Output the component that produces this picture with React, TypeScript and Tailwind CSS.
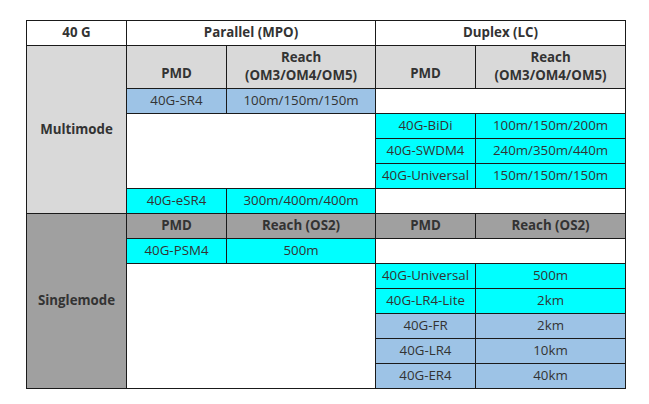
import React from "react";

const cell = "border border-[#1a1a1a] p-0 text-center align-middle h-[25px]";
const cyan = "bg-[#00ffff]";
const blue = "bg-[#9dc3e6]";
const light = "bg-[#d9d9d9]";
const dark = "bg-[#a0a0a0]";

function Pair({ pmd, reach, tone }: { pmd: string; reach: string; tone: string }) {
  return (
    <>
      <td className={`${cell} ${tone}`}>{pmd}</td>
      <td className={`${cell} ${tone}`}>{reach}</td>
    </>
  );
}

export default function App() {
  return (
    <div
      className="min-h-screen bg-white pl-[26px] pt-[20px] text-[13.3px] text-[#333]"
      style={{ fontFamily: '"Open Sans", "Liberation Sans", sans-serif' }}
    >
      <table className="table-fixed border-collapse w-[599px]">
        <colgroup>
          <col className="w-[100px]" />
          <col className="w-[100px]" />
          <col className="w-[149px]" />
          <col className="w-[100px]" />
          <col className="w-[150px]" />
        </colgroup>
        <tbody>
          <tr>
            <td className={`${cell} font-bold`}>40 G</td>
            <td colSpan={2} className={`${cell} font-bold`}>Parallel (MPO)</td>
            <td colSpan={2} className={`${cell} font-bold`}>Duplex (LC)</td>
          </tr>
          <tr>
            <td rowSpan={6} className={`${cell} ${light} font-bold`}>Multimode</td>
            <td className={`${cell} ${light} font-bold !align-bottom h-[43px] pb-[4px]`}>PMD</td>
            <td className={`${cell} ${light} font-bold !align-bottom leading-[18px] pb-[4px]`}>
              Reach
              <br />
              (OM3/OM4/OM5)
            </td>
            <td className={`${cell} ${light} font-bold !align-bottom pb-[4px]`}>PMD</td>
            <td className={`${cell} ${light} font-bold !align-bottom leading-[18px] pb-[4px]`}>
              Reach
              <br />
              (OM3/OM4/OM5)
            </td>
          </tr>
          <tr>
            <Pair pmd="40G-SR4" reach="100m/150m/150m" tone={blue} />
            <td colSpan={2} className={cell}></td>
          </tr>
          <tr>
            <td colSpan={2} rowSpan={3} className={cell}></td>
            <Pair pmd="40G-BiDi" reach="100m/150m/200m" tone={cyan} />
          </tr>
          <tr>
            <Pair pmd="40G-SWDM4" reach="240m/350m/440m" tone={cyan} />
          </tr>
          <tr>
            <Pair pmd="40G-Universal" reach="150m/150m/150m" tone={cyan} />
          </tr>
          <tr>
            <Pair pmd="40G-eSR4" reach="300m/400m/400m" tone={cyan} />
            <td colSpan={2} className={cell}></td>
          </tr>
          <tr>
            <td rowSpan={7} className={`${cell} ${dark} font-bold`}>Singlemode</td>
            <td className={`${cell} ${dark} font-bold`}>PMD</td>
            <td className={`${cell} ${dark} font-bold`}>Reach (OS2)</td>
            <td className={`${cell} ${dark} font-bold`}>PMD</td>
            <td className={`${cell} ${dark} font-bold`}>Reach (OS2)</td>
          </tr>
          <tr>
            <Pair pmd="40G-PSM4" reach="500m" tone={cyan} />
            <td colSpan={2} className={cell}></td>
          </tr>
          <tr>
            <td colSpan={2} rowSpan={5} className={cell}></td>
            <Pair pmd="40G-Universal" reach="500m" tone={cyan} />
          </tr>
          <tr>
            <Pair pmd="40G-LR4-Lite" reach="2km" tone={cyan} />
          </tr>
          <tr>
            <Pair pmd="40G-FR" reach="2km" tone={blue} />
          </tr>
          <tr>
            <Pair pmd="40G-LR4" reach="10km" tone={blue} />
          </tr>
          <tr>
            <Pair pmd="40G-ER4" reach="40km" tone={blue} />
          </tr>
        </tbody>
      </table>
    </div>
  );
}
